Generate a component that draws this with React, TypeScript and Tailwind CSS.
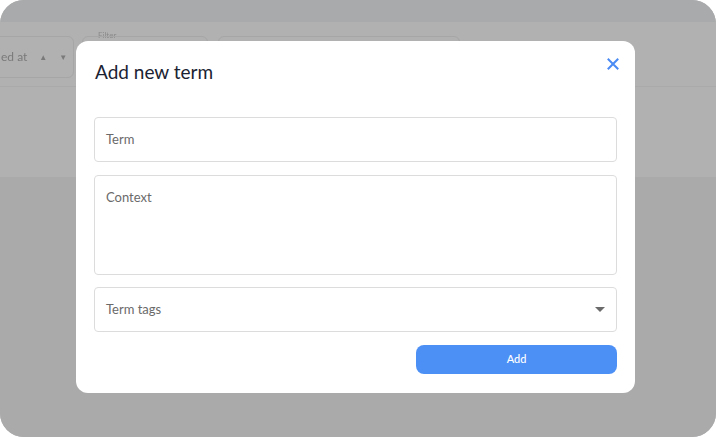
export default function App() {
  return (
    <div className="h-[437px] w-[716px] bg-white font-['Lato',sans-serif]">
      <div className="relative flex h-full flex-col overflow-hidden rounded-[24px] bg-[#aaaaab]">
        {/* page under overlay */}
        <div className="h-[22px] bg-[#a9aaab]" />
        <div className="relative h-[155px] bg-[#b1b1b1] blur-[0.6px]">
          <div className="absolute left-[-12px] top-[14px] flex h-[42px] w-[86px] items-center gap-3 rounded-md border border-[#a6a6a6] pl-[12px] text-[12px] text-[#7a7a7a]">
            <span>ed at</span>
            <span className="text-[8px]">▲</span>
            <span className="text-[8px]">▼</span>
          </div>
          <span className="absolute left-[98px] top-[7px] text-[8px] text-[#8a8a8a]">Filter</span>
          <div className="absolute left-[82px] top-[14px] h-[40px] w-[126px] rounded-md border border-[#a6a6a6]" />
          <div className="absolute left-[218px] top-[14px] h-[40px] w-[242px] rounded-md border border-[#a6a6a6]" />
          <div className="absolute left-0 right-0 top-[64px] h-px bg-[#aaaaaa]" />
        </div>
        <div className="flex-1 bg-[#aaaaab]" />

        {/* modal */}
        <div className="absolute left-[76px] top-[41px] flex w-[559px] flex-col rounded-[12px] bg-white px-[18px] pb-[19px] pt-[19px]">
          <div className="flex items-start justify-between">
            <h1 className="pl-px text-[19px] leading-[24px] text-[#1b2333]">Add new term</h1>
            <button className="mr-[-3px] mt-[-3px] text-[#4a8af4]">
              <svg width="14" height="14" viewBox="0 0 14 14" fill="none" stroke="currentColor" strokeWidth="2" strokeLinecap="square">
                <path d="M2.5 2.5l9 9M11.5 2.5l-9 9" />
              </svg>
            </button>
          </div>

          <div className="mt-[33px] flex h-[45px] items-center rounded border border-[#dcdcdc] px-[11px] text-[13px] text-[#6a6a6a]">
            Term
          </div>
          <div className="mt-[13px] h-[100px] rounded border border-[#dcdcdc] px-[11px] pt-[12px] text-[13px] text-[#6a6a6a]">
            Context
          </div>
          <div className="mt-[12px] flex h-[45px] items-center justify-between rounded border border-[#dcdcdc] pl-[11px] pr-[11px] text-[13px] text-[#6a6a6a]">
            <span>Term tags</span>
            <svg width="10" height="5" viewBox="0 0 10 5">
              <path d="M0 0h10L5 5z" fill="#6b6b6b" />
            </svg>
          </div>
          <div className="mt-[13px] flex justify-end">
            <button className="flex h-[29px] w-[201px] items-center justify-center rounded-lg bg-[#4d90f5] text-[11px] font-medium text-white">
              Add
            </button>
          </div>
        </div>
      </div>
    </div>
  );
}
